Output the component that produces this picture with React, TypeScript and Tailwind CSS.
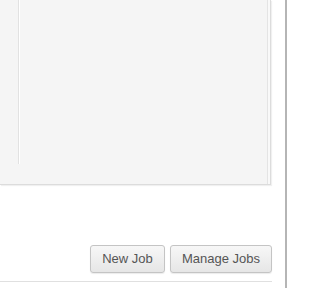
export default function App() {
  return (
    <div className="h-[288px] w-[288px] bg-white overflow-hidden" style={{ fontFamily: '"Liberation Sans", Arial, sans-serif' }}>
      <div className="h-full w-[287px] border-r-2 border-[#b5b5b5] flex flex-col">
        {/* Panel */}
        <div className="h-[185px] w-[271px] bg-[#f5f5f5] border-r border-b border-[#dcdcdc] shadow-[1px_1px_1px_rgba(0,0,0,0.06)] flex">
          <div className="h-[164px] w-[19px] border-r border-[#e2e2e2]" />
          <div className="h-[164px] w-px bg-white" />
          <div className="flex-1" />
          <div className="h-full w-[3px] border-l border-[#e4e4e4] bg-[#f9f9f9]" />
        </div>
        {/* Actions */}
        <div className="mt-[60px] w-[272px] flex justify-end gap-[5px]">
          <button className="h-[28px] w-[75px] rounded-[3px] border border-[#c4c4c4] bg-gradient-to-b from-[#f7f7f7] to-[#e6e6e6] text-[13px] text-[#555] shadow-[0_1px_1px_rgba(0,0,0,0.08)]">
            New Job
          </button>
          <button className="h-[28px] w-[102px] rounded-[3px] border border-[#c4c4c4] bg-gradient-to-b from-[#f7f7f7] to-[#e6e6e6] text-[13px] text-[#555] shadow-[0_1px_1px_rgba(0,0,0,0.08)]">
            Manage Jobs
          </button>
        </div>
        <div className="mt-[8px] h-px w-[272px] bg-[#e0e0e0]" />
      </div>
    </div>
  );
}
